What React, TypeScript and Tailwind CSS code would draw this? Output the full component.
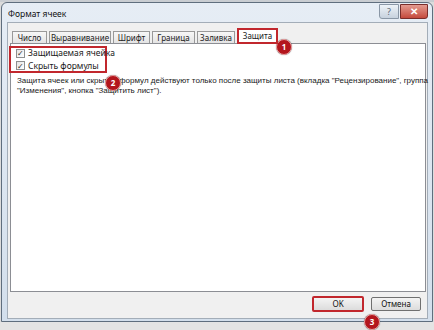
const TABS = [
  { label: 'Число', w: 'w-[35px]' },
  { label: 'Выравнивание', w: 'w-[62px]' },
  { label: 'Шрифт', w: 'w-[37px]' },
  { label: 'Граница', w: 'w-[43px]' },
  { label: 'Заливка', w: 'w-[38px]' },
]

function Badge({ n, className }: { n: string; className: string }) {
  return (
    <div
      className={`absolute w-[16px] h-[16px] rounded-full bg-[#b3161d] border border-[#e9a0a0] text-white text-[8px] font-bold flex items-center justify-center shadow-[0_0_1px_rgba(0,0,0,0.5)] ${className}`}
    >
      {n}
    </div>
  )
}

function Check({ label }: { label: string }) {
  return (
    <div className="flex items-center h-[13px]">
      <div className="w-[9px] h-[9px] border border-[#8e8f8f] bg-gradient-to-br from-[#e4e4e4] to-white flex items-center justify-center text-[8px] leading-none text-[#333]">
        ✓
      </div>
      <span className="ml-[3px] whitespace-nowrap text-[8.5px] text-[#1a1a1a]">{label}</span>
    </div>
  )
}

export default function App() {
  return (
    <div className="relative w-[434px] h-[330px] overflow-hidden bg-[#dcdcdc] font-['Noto_Sans',sans-serif]">
      <div className="h-[2px] bg-[#c9cdd2]" />

      {/* dialog window */}
      <div className="ml-[1px] w-[432px] h-[320px] rounded-t-[6px] border border-[#5f6e7e] bg-gradient-to-b from-[#e6edf5] to-[#d3dfec] flex flex-col pl-[5px] pr-[4px] pb-[2px]">
        <div className="h-[19px] flex items-start justify-between">
          <span className="mt-[7px] ml-[1px] text-[8.5px] leading-none text-[#111]">Формат ячеек</span>
          <div className="flex gap-[1px] mt-[1px]">
            <div className="w-[20px] h-[15px] rounded-bl-[3px] border border-[#8a97a6] bg-gradient-to-b from-[#eef3f8] to-[#c7d2de] flex items-center justify-center text-[9px] text-[#5b6674]">
              ?
            </div>
            <div className="w-[28px] h-[15px] rounded-br-[3px] border border-[#7a2d2a] bg-gradient-to-b from-[#e39a90] to-[#c4493d] flex items-center justify-center text-[10px] font-bold text-white">
              ✕
            </div>
          </div>
        </div>

        {/* client area */}
        <div className="flex-1 border border-[#a3adb8] bg-[#f0f0f0] flex flex-col pt-[4px] pl-[2px]">
          <div className="h-[16px] flex items-end pl-[2px]">
            {TABS.map((t) => (
              <div
                key={t.label}
                className={`${t.w} h-[12px] mr-[2px] border border-b-0 border-[#999] bg-gradient-to-b from-[#f7f7f7] to-[#e4e4e4] flex items-center justify-center text-[8px] text-[#222]`}
              >
                {t.label}
              </div>
            ))}
            <div className="relative z-10 -mb-[1px] w-[41px] h-[16px] border-2 border-[#c1272d] bg-white flex items-center justify-center text-[8px] text-[#222]">
              Защита
            </div>
          </div>

          <div className="h-[249px] mr-[1px] border border-[#8c8e94] bg-white flex flex-col">
            <div className="-ml-[2px] mt-[2px] w-[98px] h-[27px] border-2 border-[#c1272d] flex flex-col justify-center pl-[5px]">
              <Check label="Защищаемая ячейка" />
              <Check label="Скрыть формулы" />
            </div>
            <p className="mt-[3px] ml-[6px] whitespace-nowrap font-['Liberation_Sans',sans-serif] text-[8px] leading-[10px] text-[#1a1a1a]">
              Защита ячеек или скрытие формул действуют только после защиты листа (вкладка "Рецензирование", группа
              <br />
              "Изменения", кнопка "Защитить лист").
            </p>
          </div>

          <div className="flex-1 flex items-start justify-end pt-[4px] pr-[6px] gap-[7px]">
            <button className="w-[52px] h-[16px] border-2 border-[#c1272d] rounded-[2px] bg-gradient-to-b from-[#f4f4f4] to-[#dcdcdc] text-[8px] text-[#111]">
              OK
            </button>
            <button className="w-[50px] h-[14px] mt-[1px] border border-[#707070] rounded-[2px] bg-gradient-to-b from-[#f4f4f4] to-[#dcdcdc] text-[8px] text-[#111]">
              Отмена
            </button>
          </div>
        </div>
      </div>

      {/* excel grid behind */}
      <div className="h-[8px] bg-[#e4e4e4]" />

      <Badge n="1" className="left-[276px] top-[39px]" />
      <Badge n="2" className="left-[105px] top-[75px]" />
      <Badge n="3" className="left-[364px] top-[314px]" />
    </div>
  )
}
